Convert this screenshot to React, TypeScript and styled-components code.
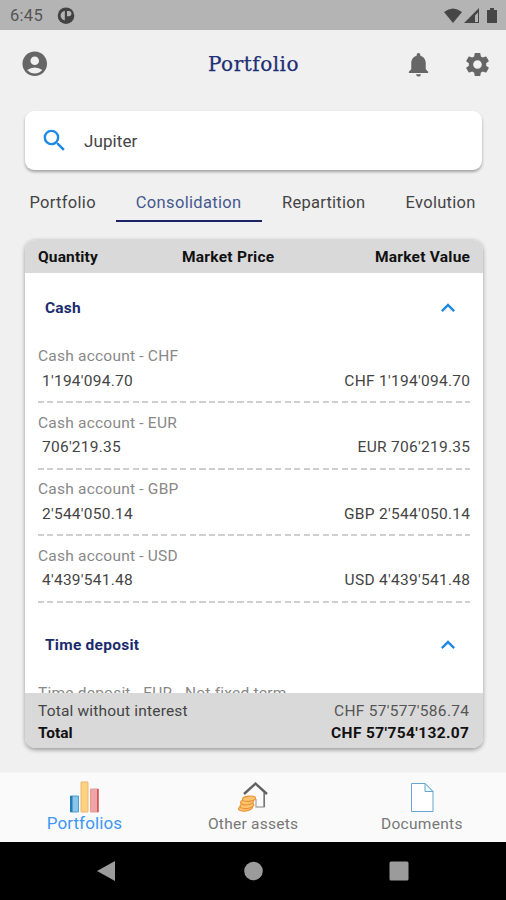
import React from "react";
import styled, { createGlobalStyle } from "styled-components";
import { MdAccountCircle, MdNotifications, MdSettings, MdSearch, MdKeyboardArrowUp } from "react-icons/md";

const GlobalStyle = createGlobalStyle`
  * { box-sizing: border-box; }
  body { margin: 0; background: #f0f0f0; font-family: Roboto, sans-serif; }
`;

const Screen = styled.div`
  width: 506px;
  height: 900px;
  display: flex;
  flex-direction: column;
  overflow: hidden;
  background: #f0f0f0;
  color: #444;
  font-size: 16px;
`;

const Text = styled.span<{ $size?: number; $spacing?: number; $color?: string; $weight?: number }>`
  font-size: ${(p) => p.$size ?? 16}px;
  letter-spacing: ${(p) => p.$spacing ?? 0}px;
  margin-right: ${(p) => -(p.$spacing ?? 0)}px;
  color: ${(p) => p.$color ?? "inherit"};
  font-weight: ${(p) => p.$weight ?? 400};
  white-space: nowrap;
`;

const StatusBar = styled.div`
  flex: none;
  height: 30px;
  padding: 1px 7px 0 10px;
  display: flex;
  align-items: center;
  background: #b4b4b4;
  color: #484848;
`;

const Clock = styled(Text)`
  width: 47px;
`;

const StatusIcons = styled.svg`
  margin-left: auto;
`;

const AppBar = styled.header`
  flex: none;
  height: 81px;
  padding: 0 14px 13px 20px;
  display: grid;
  grid-template-columns: 112px 1fr 112px;
  align-items: center;
  color: #666;
`;

const Title = styled.h1`
  margin: 0;
  padding-right: 5px;
  text-align: center;
  font: 400 20px "DejaVu Serif", serif;
  letter-spacing: 0.5px;
  color: #1d2f75;
  -webkit-text-stroke: 0.25px #1d2f75;
`;

const Actions = styled.div`
  display: flex;
  justify-content: flex-end;
  gap: 30px;
`;

const SearchField = styled.div`
  flex: none;
  height: 59px;
  margin: 0 24px 0 25px;
  padding: 0 15px;
  display: flex;
  align-items: center;
  gap: 15px;
  border-radius: 9px;
  background: #fff;
  box-shadow: 0 2px 3px rgba(0, 0, 0, 0.32);
`;

const Tabs = styled.nav`
  flex: none;
  height: 52px;
  margin: 0 10px 18px;
  display: grid;
  grid-template-columns: 106px 146px 124px 110px;
`;

const Tab = styled.div<{ $active?: boolean }>`
  display: flex;
  justify-content: center;
  align-items: center;
  padding: 14px 1px 0 0;
  color: ${(p) => (p.$active ? "#46598f" : "#444")};
  border-bottom: 2px solid ${(p) => (p.$active ? "#1b2366" : "transparent")};
`;

const Card = styled.section`
  flex: none;
  height: 508px;
  margin: 0 23px 0 25px;
  display: flex;
  flex-direction: column;
  border-radius: 10px;
  overflow: hidden;
  background: #fff;
  box-shadow: 0 1.5px 4px rgba(0, 0, 0, 0.36);
`;

const CardHeader = styled.div`
  flex: none;
  height: 33px;
  padding: 0 13px;
  display: grid;
  grid-template-columns: 144px 1fr auto;
  align-items: center;
  background: #d9d9d9;
  color: #111;
`;

const Holdings = styled.div`
  flex: 1;
  min-height: 0;
  overflow: hidden;
`;

const GroupHeader = styled.div`
  height: 71px;
  padding: 0 21px 2px 20px;
  display: flex;
  align-items: center;
  justify-content: space-between;
  color: #1b2c6e;
`;

const Entry = styled.div`
  height: 66.5px;
  margin: 0 13px;
  display: flex;
  flex-direction: column;
  background: repeating-linear-gradient(90deg, #cfcfcf 0 6px, transparent 6px 9.5px) 0 57px / 100% 2px no-repeat;
`;

const EntryLine = styled.div<{ $indent?: boolean }>`
  height: 24.5px;
  padding-left: ${(p) => (p.$indent ? 4 : 0)}px;
  display: flex;
  align-items: center;
  justify-content: space-between;
`;

const Totals = styled.footer`
  flex: none;
  height: 55px;
  padding: 7px 14px 4px 13px;
  display: flex;
  flex-direction: column;
  background: #d9d9d9;
`;

const TotalLine = styled.div`
  height: 22px;
  display: flex;
  align-items: center;
  justify-content: space-between;
`;

const BottomNav = styled.nav`
  flex: none;
  height: 70px;
  margin-top: 24px;
  display: grid;
  grid-template-columns: repeat(3, 1fr);
  background: #fafafa;
  border-top: 1px solid #f5f5f5;
`;

const NavItem = styled.div<{ $active?: boolean }>`
  display: flex;
  flex-direction: column;
  align-items: center;
  padding-top: 7px;
  gap: ${(p) => (p.$active ? 0 : 1)}px;
  line-height: 18px;
`;

const SystemBar = styled.div`
  flex: 1;
  display: grid;
  grid-template-columns: 34px 34px 34px;
  justify-content: center;
  column-gap: 112px;
  align-items: center;
  justify-items: center;
  background: #000;
`;

const groups = [
  {
    name: "Cash",
    spacing: 0.2,
    rows: [
      ["Cash account - CHF", "1'194'094.70", "CHF 1'194'094.70"],
      ["Cash account - EUR", "706'219.35", "EUR 706'219.35"],
      ["Cash account - GBP", "2'544'050.14", "GBP 2'544'050.14"],
      ["Cash account - USD", "4'439'541.48", "USD 4'439'541.48"],
    ],
  },
  { name: "Time deposit", spacing: 0.25, rows: [["Time deposit - EUR - Not fixed term", "", ""]] },
];

const ChartIcon = () => (
  <svg width="34" height="34" viewBox="0 0 34 34">
    <path d="M3.5 16h8v16h-8z" fill="#87c5ed" stroke="#559ccb" />
    <path d="M3 16h2.5v16H3z" fill="#247db7" />
    <path d="M14 2h7v30h-7z" fill="#fbd27e" stroke="#eeb576" />
    <path d="M23.5 9h8v23h-8z" fill="#efa4a5" stroke="#e89a99" />
    <path d="M30 9h1.5v23H30z" fill="#cf5759" />
  </svg>
);

const HouseIcon = () => (
  <svg width="34" height="34" viewBox="0 0 34 34" fill="none">
    <path d="M28 12v15h-8v-8" stroke="#aaa" strokeWidth="1.3" />
    <path d="M28.3 13v14" stroke="#777" strokeWidth="1.5" />
    <path d="M8 14 19.5 3.5 31 14" stroke="#626262" strokeWidth="2.4" />
    <g fill="#ffc36c" stroke="#e99338" strokeWidth="1.2">
      <ellipse cx="9.5" cy="28" rx="7" ry="3" transform="rotate(-8 9.5 28)" />
      <ellipse cx="11" cy="25.5" rx="7" ry="3" transform="rotate(-8 11 25.5)" />
      <ellipse cx="11" cy="22" rx="6.5" ry="2.8" transform="rotate(-8 11 22)" />
      <ellipse cx="13" cy="18.7" rx="6.5" ry="2.6" transform="rotate(-6 13 18.7)" />
    </g>
  </svg>
);

const DocumentIcon = () => (
  <svg width="34" height="34" viewBox="0 0 34 34" fill="#fff" stroke="#67a6d2">
    <path d="M6.5 3.5h13.5l8 8v20h-21.5z" />
    <path d="M20 3.5v8h8z" fill="#edf8ff" />
  </svg>
);

export default function App() {
  return (
    <Screen>
      <GlobalStyle />
      <StatusBar>
        <Clock $size={16.5} $color="#555" $spacing={0.3}>6:45</Clock>
        <svg width="18" height="18" viewBox="0 0 18 18">
          <circle cx="9" cy="8.7" r="8.3" fill="#424242" />
          <path d="M7.8 3.8v9.8C5.4 12.8 3.6 11 3.6 8.7S5.2 4.5 7.8 3.8Z" fill="#b4b4b4" />
          <path d="M10 4h1.8a2.6 2.6 0 0 1 0 5.2H10Z" fill="#b4b4b4" />
        </svg>
        <StatusIcons width="56" height="18" viewBox="0 0 56 18" fill="#464646">
          <path d="M1 5Q10-2 19 5L10 16Z" />
          <path fillRule="evenodd" d="M21 16 36 1v15Zm11-1h3V5.5l-3 3Z" />
          <path d="M44 3h3V1h4v2h3v13H44Z" />
        </StatusIcons>
      </StatusBar>

      <AppBar>
        <MdAccountCircle size={29.5} />
        <Title>Portfolio</Title>
        <Actions>
          <MdNotifications size={29} />
          <MdSettings size={29} />
        </Actions>
      </AppBar>

      <SearchField>
        <MdSearch size={29} color="#1e88e5" />
        <Text $size={17} $spacing={0.1}>Jupiter</Text>
      </SearchField>

      <Tabs>
        <Tab><Text $size={16.5} $spacing={0.3}>Portfolio</Text></Tab>
        <Tab $active><Text $size={16.5} $spacing={0.33}>Consolidation</Text></Tab>
        <Tab><Text $size={16.5} $spacing={0.25}>Repartition</Text></Tab>
        <Tab><Text $size={16.5} $spacing={0.3}>Evolution</Text></Tab>
      </Tabs>

      <Card>
        <CardHeader>
          <Text $size={15.5} $weight={700} $spacing={0.15}>Quantity</Text>
          <Text $size={15.5} $weight={700} $spacing={0.25}>Market Price</Text>
          <Text $size={15.5} $weight={700} $spacing={0.25}>Market Value</Text>
        </CardHeader>
        <Holdings>
          {groups.map((group) => (
            <React.Fragment key={group.name}>
              <GroupHeader>
                <Text $weight={700} $size={15.5} $spacing={group.spacing}>{group.name}</Text>
                <MdKeyboardArrowUp size={28} color="#1e88e5" />
              </GroupHeader>
              {group.rows.map(([name, quantity, value]) => (
                <Entry key={name}>
                  <EntryLine><Text $size={15.5} $spacing={0.22} $color="#888">{name}</Text></EntryLine>
                  {quantity && (
                    <EntryLine $indent>
                      <Text $size={15.5} $spacing={0.25}>{quantity}</Text>
                      <Text $size={15.5} $spacing={0.28}>{value}</Text>
                    </EntryLine>
                  )}
                </Entry>
              ))}
            </React.Fragment>
          ))}
        </Holdings>
        <Totals>
          <TotalLine>
            <Text $size={15.5} $spacing={0.18}>Total without interest</Text>
            <Text $size={15.5} $spacing={0.3} $color="#555">CHF 57'577'586.74</Text>
          </TotalLine>
          <TotalLine>
            <Text $size={15.5} $weight={700} $color="#111">Total</Text>
            <Text $size={15.5} $weight={700} $spacing={0.38} $color="#111">CHF 57'754'132.07</Text>
          </TotalLine>
        </Totals>
      </Card>

      <BottomNav>
        <NavItem $active><ChartIcon /><Text $size={17} $spacing={0.1} $color="#3d97f5">Portfolios</Text></NavItem>
        <NavItem><HouseIcon /><Text $size={15.5} $spacing={0.25} $color="#777">Other assets</Text></NavItem>
        <NavItem><DocumentIcon /><Text $size={15.5} $spacing={0.3} $color="#777">Documents</Text></NavItem>
      </BottomNav>

      <SystemBar>
        <svg width="20" height="22" viewBox="0 0 20 22"><path d="M0 11 18 1v20Z" fill="#9b9b9b" /></svg>
        <svg width="20" height="20" viewBox="0 0 20 20"><circle cx="10.5" cy="10" r="9.3" fill="#9b9b9b" /></svg>
        <svg width="20" height="20" viewBox="0 0 20 20"><rect x="0.5" y="0.5" width="19" height="19" rx="1.5" fill="#9b9b9b" /></svg>
      </SystemBar>
    </Screen>
  );
}
